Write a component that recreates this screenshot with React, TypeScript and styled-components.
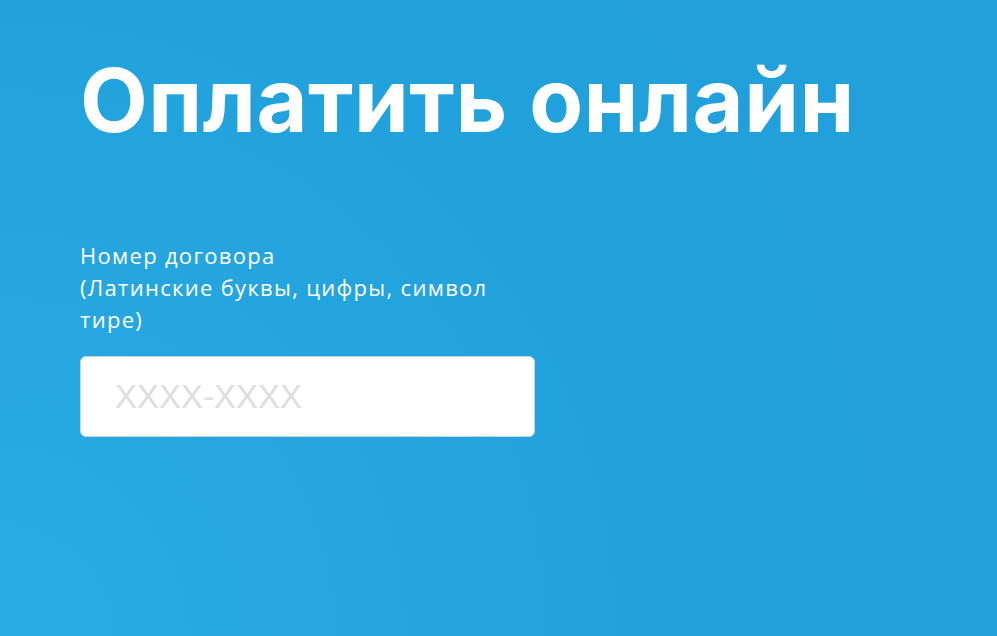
import React from 'react';
import styled, { createGlobalStyle } from 'styled-components';

const GlobalStyle = createGlobalStyle`
  html, body {
    margin: 0;
    padding: 0;
  }
  body {
    font-family: "Open Sans", "Noto Sans", "Liberation Sans", sans-serif;
  }
`;

const App = () => {
  return (
    <>
      <GlobalStyle />
      <PayBlock>
        <Title>Оплатить онлайн</Title>
        <Form>
          <FieldLabel htmlFor="contract">
            Номер договора
            <br />
            (Латинские буквы, цифры, символ тире)
          </FieldLabel>
          <ContractInput id="contract" placeholder="XXXX-XXXX" />
        </Form>
      </PayBlock>
    </>
  );
};

// light corner bottom-left, fading to the flat brand blue
const PayBlock = styled.main`
  box-sizing: border-box;
  width: 100%;
  min-height: 636px;
  padding: 56px 80px 0;
  color: #fff;
  background-color: #21a0db;
  background-image: radial-gradient(
    circle at 0% 100%,
    #29abe4 0px,
    #26a7e1 300px,
    #22a2dc 650px,
    #21a0db 900px
  );
`;

const Title = styled.h1`
  margin: 0;
  font-family: Inter, "Open Sans", sans-serif;
  font-size: 88px;
  line-height: 1;
  font-weight: 700;
  letter-spacing: 0.5px;
`;

const Form = styled.form`
  display: flex;
  flex-direction: column;
  width: 455px;
  margin-top: 95px;
`;

const FieldLabel = styled.label`
  font-size: 22px;
  line-height: 32px;
  font-weight: 400;
  letter-spacing: 1.3px;
  margin-bottom: 21px;
`;

const ContractInput = styled.input`
  box-sizing: border-box;
  width: 455px;
  height: 81px;
  padding: 0 34px;
  border: 1px solid #c9d3da;
  border-radius: 6px;
  background: #fff;
  font-family: "Liberation Sans", Arial, sans-serif;
  font-size: 33px;
  color: #333;
  outline: none;

  &::placeholder {
    color: #dedede;
  }
`;

export default App;
